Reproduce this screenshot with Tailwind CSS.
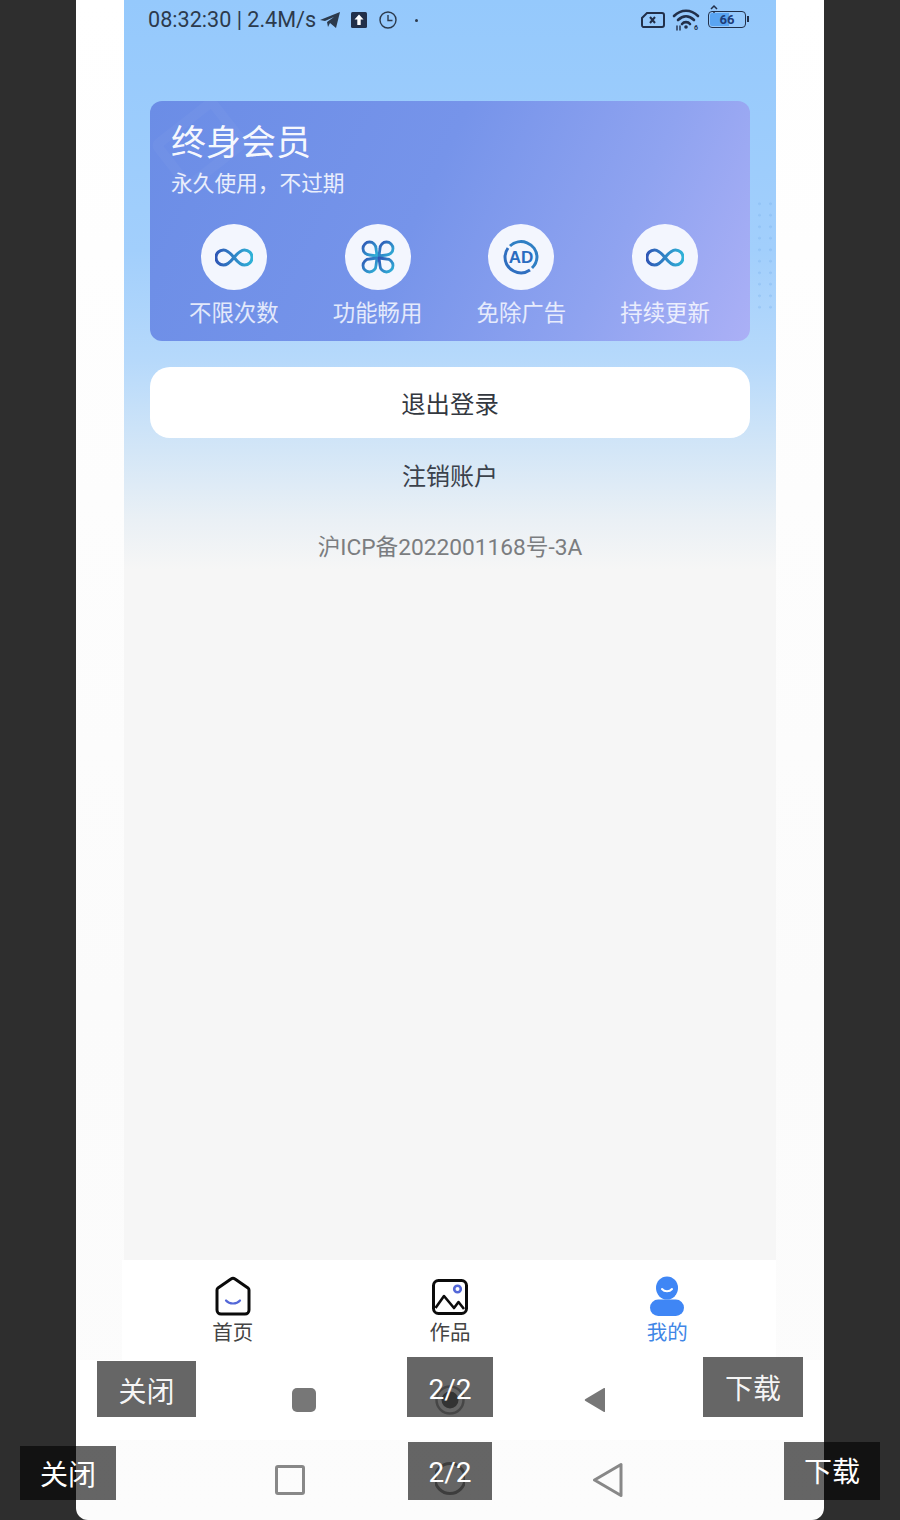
<!DOCTYPE html>
<html lang="zh">
<head>
<meta charset="utf-8">
<script src="https://cdn.jsdelivr.net/npm/@tailwindcss/browser@4"></script>
<title>我的</title>
</head>
<body class="m-0">
<div class="relative w-[900px] h-[1520px] overflow-hidden bg-[#2e2e2e] font-['Roboto','Noto_Sans_CJK_SC',sans-serif]">
  <svg class="absolute w-0 h-0">
    <defs>
      <linearGradient id="ig" x1="0" y1="0" x2="1" y2="1">
        <stop offset="0" stop-color="#2f55b5"/>
        <stop offset="1" stop-color="#2fb4d8"/>
      </linearGradient>
      <linearGradient id="ih" gradientUnits="userSpaceOnUse" x1="0" y1="0" x2="40" y2="0">
        <stop offset="0" stop-color="#2f55b5"/>
        <stop offset="1" stop-color="#2fb4d8"/>
      </linearGradient>
    </defs>
  </svg>

  <div class="ml-[76px] w-[748px] h-full bg-[linear-gradient(180deg,#ffffff_0px,#fdfdfd_500px,#fbfbfb_1000px,#fcfcfc_100%)] rounded-b-xl flex flex-col items-center overflow-hidden">
    <!-- screen -->
    <div class="relative w-[652px] h-[1260px] shrink-0 pl-[26px] pr-[26px] bg-[linear-gradient(180deg,#95c9fc_0px,#a2cffc_250px,#b6d9fb_360px,#d3e6f7_450px,#eaf0f5_520px,#f6f6f6_570px,#f6f6f6_100%)]">
      <!-- status bar -->
      <div class="-ml-[2px] mr-[1px] h-[40px] flex items-center text-[#2c3a4c] text-[21.600px] leading-none">
        <span class="whitespace-nowrap">08:32:30 | 2.4M/s</span>
        <svg class="ml-[3px]" width="22" height="18" viewBox="0 0 22 18"><path d="M1 9 21 1 17 17 11 12 9 16 8 11 15 6 6 10z" fill="#2c3a4c"/></svg>
        <svg class="ml-[9px]" width="18" height="18" viewBox="0 0 18 18"><rect x="1" y="1" width="16" height="16" rx="1.500" fill="#22304a"/><path d="M9 3.500 13.500 8.500H10.700V14H7.300V8.500H4.500z" fill="#fff"/></svg>
        <svg class="ml-[10px]" width="20" height="20" viewBox="0 0 20 20" fill="none" stroke="#2c3a4c" stroke-width="1.400"><circle cx="10" cy="10" r="8"/><path d="M10 5v5.500h4.500"/></svg>
        <span class="ml-[17px] w-[3px] h-[3px] rounded-full bg-[#2c3a4c]"></span>
        <span class="flex-1"></span>
        <svg width="26" height="18" viewBox="0 0 26 18" fill="none" stroke="#22304a" stroke-width="2"><path d="M7 2H22a2 2 0 0 1 2 2V14a2 2 0 0 1-2 2H3a2 2 0 0 1-1-2V7z"/><path d="M10 6l5 6M15 6l-5 6"/></svg>
        <svg class="ml-[6px]" width="28" height="24" viewBox="0 0 28 24" fill="none" stroke="#22304a" stroke-width="2.600" stroke-linecap="round"><path d="M2 8C9 1 19 1 26 8"/><path d="M6 12C11 7 17 7 22 12"/><path d="M10 16C12 13.500 16 13.500 18 16"/><circle cx="14" cy="19" r="1.800" fill="#22304a" stroke="none"/><path d="M5 18v4M8 18v4" stroke-width="1.400"/><text x="22" y="22" font-family="Roboto" font-weight="700" font-size="7" fill="#22304a" stroke="none">6</text></svg>
        <span class="relative ml-[8px] w-[38px] h-[17px] mt-[-2px] border-[1.500px] border-[#22304a] rounded-[4px] flex items-center justify-center">
          <span class="absolute left-[1px] top-[1px] bottom-[1px] w-[52%] rounded-l-[2px] bg-[#5aa5f2]"></span>
          <span class="relative text-[13px] font-bold text-[#1f3d78]">66</span>
          <svg class="absolute left-[1px] -top-[8px]" width="8" height="9" viewBox="0 0 8 9" fill="none" stroke="#22304a" stroke-width="1.500"><path d="M1 5 4 2 7 5M4 7v2"/></svg>
        </span>
        <span class="ml-[1px] w-[2px] h-[6px] mt-[-2px] bg-[#22304a]"></span>
      </div>

      <!-- member card -->
      <div class="relative mt-[61px] h-[240px] rounded-xl overflow-hidden px-[21px] pt-[17px] text-white bg-[linear-gradient(115deg,#6b8de6_0%,#7694ea_45%,#8fa3f0_75%,#abb0f6_100%)]">
        <div class="absolute left-[10px] top-[12px] w-[80px] h-[62px] rotate-[-38deg] rounded-lg border-[10px] border-white/[0.03]"></div>
        <div class="relative text-[35px] leading-[44px] font-['Noto_Sans_CJK_SC',sans-serif] text-white/95">终身会员</div>
        <div class="relative mt-[5px] text-[21.700px] leading-[30px] font-['Noto_Sans_CJK_SC',sans-serif] text-white/85">永久使用，不过期</div>
        <div class="relative mt-[27px] -mx-[21px] pl-[12px] pr-[12px] grid grid-cols-4 w-[599px]">
          <div class="flex flex-col items-center">
            <div class="w-[66px] h-[66px] rounded-full bg-[#f3f6fe] flex items-center justify-center">
              <svg width="38" height="21" viewBox="0 0 40 22" fill="none" stroke="url(#ih)" stroke-width="3.200"><path d="M20 11C16 6 13 3 9 3a8 8 0 0 0 0 16c4 0 7-3 11-8s7-8 11-8a8 8 0 0 1 0 16c-4 0-7-3-11-8z"/></svg>
            </div>
            <div class="mt-[5px] text-[22.400px] leading-[32px] font-['Noto_Sans_CJK_SC',sans-serif] text-white/80 whitespace-nowrap">不限次数</div>
          </div>
          <div class="flex flex-col items-center">
            <div class="w-[66px] h-[66px] rounded-full bg-[#f3f6fe] flex items-center justify-center">
              <svg width="34" height="34" viewBox="0 0 34 34" fill="none" stroke="url(#ig)" stroke-width="2.800" stroke-linejoin="round"><path d="M16 16 8.500 15A6.500 6.500 0 1 1 15 8.500z"/><path d="M18 16 19 8.500A6.500 6.500 0 1 1 25.500 15z"/><path d="M16 18 15 25.500A6.500 6.500 0 1 1 8.500 19z"/><path d="M18 18 25.500 19A6.500 6.500 0 1 1 19 25.500z"/></svg>
            </div>
            <div class="mt-[5px] text-[22.400px] leading-[32px] font-['Noto_Sans_CJK_SC',sans-serif] text-white/80 whitespace-nowrap">功能畅用</div>
          </div>
          <div class="flex flex-col items-center">
            <div class="w-[66px] h-[66px] rounded-full bg-[#f3f6fe] flex items-center justify-center">
              <svg width="42" height="42" viewBox="0 0 42 42" fill="none"><path d="M10 10A16 16 0 0 1 37 21A16 16 0 0 1 32 32" stroke="#2f7fc4" stroke-width="3"/><path d="M30 34A16 16 0 0 1 5 21A16 16 0 0 1 8 12" stroke="#2f6fc0" stroke-width="3"/><text x="21" y="27" text-anchor="middle" font-family="Liberation Sans" font-weight="700" font-size="17" fill="#2a6cc0">AD</text></svg>
            </div>
            <div class="mt-[5px] text-[22.400px] leading-[32px] font-['Noto_Sans_CJK_SC',sans-serif] text-white/80 whitespace-nowrap">免除广告</div>
          </div>
          <div class="flex flex-col items-center">
            <div class="w-[66px] h-[66px] rounded-full bg-[#f3f6fe] flex items-center justify-center">
              <svg width="38" height="21" viewBox="0 0 40 22" fill="none" stroke="url(#ih)" stroke-width="3.200"><path d="M20 11C16 6 13 3 9 3a8 8 0 0 0 0 16c4 0 7-3 11-8s7-8 11-8a8 8 0 0 1 0 16c-4 0-7-3-11-8z"/></svg>
            </div>
            <div class="mt-[5px] text-[22.400px] leading-[32px] font-['Noto_Sans_CJK_SC',sans-serif] text-white/80 whitespace-nowrap">持续更新</div>
          </div>
        </div>
      </div>
      <div class="absolute left-[630px] top-[198px] w-[20px] h-[112px] bg-[radial-gradient(circle,#7fb4ee_1.200px,transparent_1.600px)] bg-[length:11px_11.500px] opacity-40"></div>

      <!-- logout -->
      <div class="mt-[26px] h-[71px] rounded-[20px] bg-white flex items-center justify-center pt-[2px] text-[24.400px] text-[#33383f] font-['Noto_Sans_CJK_SC',sans-serif]">退出登录</div>
      <div class="mt-[17px] h-[40px] flex items-center justify-center text-[24px] text-[#3b424c] font-['Noto_Sans_CJK_SC',sans-serif]">注销账户</div>
      <div class="mt-[33px] h-[40px] flex items-center justify-center text-[22.700px] text-[#7b7d80] whitespace-nowrap">沪ICP备2022001168号-3A</div>
    </div>

    <!-- bottom nav -->
    <div class="w-[654px] -ml-[2px] h-[100px] shrink-0 bg-white grid grid-cols-3 pl-[2px]">
      <div class="flex flex-col items-center pt-[16px]">
        <svg width="40" height="41" viewBox="0 0 40 41" fill="none"><path d="M18 3 5 12a2.500 2.500 0 0 0-1 2V34a4 4 0 0 0 4 4H32a4 4 0 0 0 4-4V14a2.500 2.500 0 0 0-1-2L22 3a3.500 3.500 0 0 0-4 0z" stroke="#0b0b0b" stroke-width="3" stroke-linejoin="round"/><path d="M13 24.500c3.500 4 10.500 4 14 0" stroke="#5468d8" stroke-width="2.200" stroke-linecap="round"/></svg>
        <div class="-mt-[1px] text-[20.500px] leading-[30px] text-[#444] font-['Noto_Sans_CJK_SC',sans-serif]">首页</div>
      </div>
      <div class="flex flex-col items-center pt-[16px]">
        <svg width="40" height="41" viewBox="0 0 40 41" fill="none"><rect x="3.500" y="4.500" width="33" height="33" rx="5" stroke="#0b0b0b" stroke-width="3"/><circle cx="27.500" cy="13" r="3.300" stroke="#5468d8" stroke-width="2.600"/><path d="M5.500 32 14 20 24 32 28.500 26 34 33" stroke="#0b0b0b" stroke-width="2.600" stroke-linejoin="round"/></svg>
        <div class="-mt-[1px] text-[20.500px] leading-[30px] text-[#444] font-['Noto_Sans_CJK_SC',sans-serif]">作品</div>
      </div>
      <div class="flex flex-col items-center pt-[16px]">
        <svg width="40" height="41" viewBox="0 0 40 41"><ellipse cx="20" cy="12" rx="11" ry="11.500" fill="#3f86f5"/><path d="M15 13c2.500 3 7.500 3 10 0" stroke="#fff" stroke-width="2" fill="none" stroke-linecap="round"/><rect x="3" y="23.500" width="34" height="16.500" rx="8.200" fill="#3f86f5"/></svg>
        <div class="-mt-[1px] text-[20.500px] leading-[30px] text-[#3f86e6] font-['Noto_Sans_CJK_SC',sans-serif]">我的</div>
      </div>
    </div>

    <!-- system nav, filled -->
    <div class="w-full h-[80px] shrink-0 bg-white pr-[2px] flex items-center justify-center gap-[119px]">
      <div class="w-[24px] h-[24px] rounded-[5px] bg-[#777]"></div>
      <svg width="30" height="30" viewBox="0 0 30 30" fill="none"><circle cx="15" cy="15" r="13.500" stroke="#b0b0b0" stroke-width="2.500"/><circle cx="15" cy="15" r="8.500" fill="#808080"/></svg>
      <svg width="22" height="26" viewBox="0 0 22 26"><path d="M21 1.500V24.500a.6.6 0 0 1-1 .4L1.500 14a1.200 1.200 0 0 1 0-2L20 1.100a.6.6 0 0 1 1 .4z" fill="#777"/></svg>
    </div>
    <!-- system nav, outlined -->
    <div class="w-full h-[80px] shrink-0 pr-[2px] flex items-center justify-center gap-[130px]">
      <div class="w-[30px] h-[30px] rounded-[3px] border-[3px] border-[#888]"></div>
      <svg width="30" height="36" viewBox="0 0 30 36" fill="none"><circle cx="15" cy="16.500" r="15" stroke="#999" stroke-width="3"/></svg>
      <svg class="-ml-[2px]" width="30" height="36" viewBox="0 0 30 36" fill="none"><path d="M28 2.500V33.500L1.500 18z" stroke="#888" stroke-width="3" stroke-linejoin="round"/></svg>
    </div>
  </div>

  <!-- image viewer overlays -->
  <div class="absolute left-[97px] top-[1361px] w-[99px] h-[56px] pt-[2px] bg-black/60 flex items-center justify-center text-white/95 text-[28px] font-['Noto_Sans_CJK_SC',sans-serif]">关闭</div>
  <div class="absolute left-[407px] top-[1357px] w-[86px] h-[60px] pt-[5px] bg-black/60 flex items-center justify-center text-white text-[28px]">2/2</div>
  <div class="absolute left-[703px] top-[1357px] w-[100px] h-[60px] bg-black/60 flex items-center justify-center text-white/95 text-[28px] font-['Noto_Sans_CJK_SC',sans-serif]">下载</div>
  <div class="absolute left-[20px] top-[1446px] w-[96px] h-[54px] bg-black/60 flex items-center justify-center text-white text-[28px] font-['Noto_Sans_CJK_SC',sans-serif]">关闭</div>
  <div class="absolute left-[408px] top-[1442px] w-[84px] h-[58px] pt-[4px] bg-black/60 flex items-center justify-center text-white text-[28px]">2/2</div>
  <div class="absolute left-[784px] top-[1442px] w-[96px] h-[58px] pb-[2px] bg-black/60 flex items-center justify-center text-white text-[28px] font-['Noto_Sans_CJK_SC',sans-serif]">下载</div>
</div>
</body>
</html>
